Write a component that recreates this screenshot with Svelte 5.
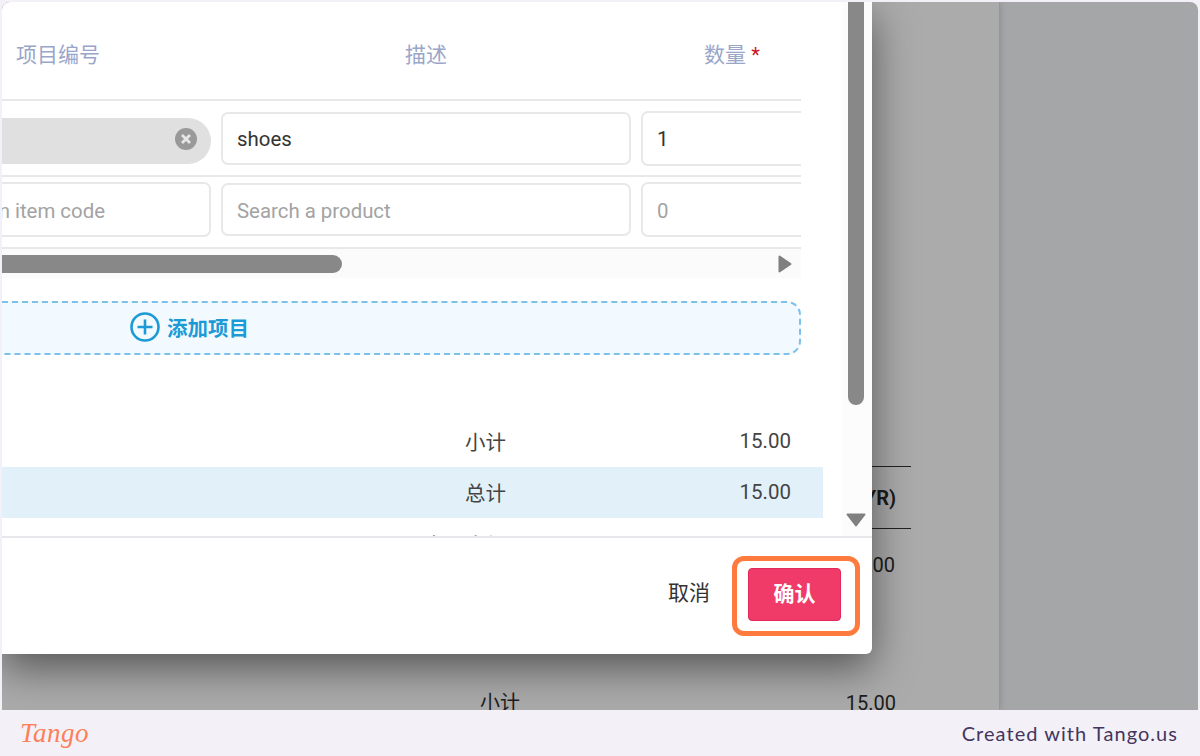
<script>
  const summary = [
    { label: '小计', value: '15.00' },
    { label: '总计', value: '15.00', total: true },
    { label: '实际金额', value: '15.00' }
  ]
</script>

<div class="page">
  <div class="shot">
    <div class="behind">
      <div class="head-lines"><b>(YR)</b></div>
      <div class="behind-num first">15.00</div>
      <div class="behind-row"><span>小计</span><span>15.00</span></div>
    </div>

    <div class="dialog">
      <div class="body">
        <div class="content">
          <div class="table">
            <div class="thead">
              <div class="th code">项目编号</div>
              <div class="th desc">描述</div>
              <div class="th qty">数量 <i>*</i></div>
            </div>

            <div class="row first-row">
              <div class="chip">
                <svg viewBox="0 0 22 22" width="22" height="22">
                  <circle cx="11" cy="11" r="11" fill="#999" />
                  <path d="M7 7l8 8M15 7l-8 8" stroke="#e6e6e6" stroke-width="2.8" />
                </svg>
              </div>
              <div class="input desc-input">shoes</div>
              <div class="input qty-input tall">1</div>
            </div>

            <div class="row second-row">
              <div class="input code-input ph tall"><span class="cut">Search an item code</span></div>
              <div class="input desc-input ph">Search a product</div>
              <div class="input qty-input ph tall">0</div>
            </div>

            <div class="hscroll">
              <div class="hthumb"></div>
              <svg class="harrow" viewBox="0 0 14 18" width="14" height="18"><path d="M1.5 1.5l11 7.500-11 7.500z" fill="#808080" stroke="#808080" stroke-width="2" stroke-linejoin="round" /></svg>
            </div>
          </div>

          <div class="add">
            <svg viewBox="0 0 30 30" width="30" height="30">
              <circle cx="15" cy="15" r="13.500" fill="none" stroke="#1b9ad6" stroke-width="2.600" />
              <path d="M15 7.500v15M7.500 15h15" stroke="#1b9ad6" stroke-width="2.600" />
            </svg>
            <span>添加项目</span>
          </div>

          <div class="summary">
            {#each summary as s}
              <div class="sum-row" class:total={s.total}>
                <span class="sum-label">{s.label}</span>
                <span class="sum-value">{s.value}</span>
              </div>
            {/each}
          </div>
        </div>

        <div class="vscroll">
          <div class="vthumb"></div>
          <svg class="varrow" viewBox="0 0 20 14" width="20" height="14"><path d="M1.5 1.500h17l-8.500 11z" fill="#808080" stroke="#808080" stroke-width="2" stroke-linejoin="round" /></svg>
        </div>
      </div>

      <div class="foot">
        <span class="cancel">取消</span>
        <div class="highlight">
          <button>确认</button>
        </div>
      </div>
    </div>
  </div>

  <div class="footer">
    <span class="logo">Tango</span>
    <span class="credit">Created with Tango.us</span>
  </div>
</div>

<style>
  :global(body) {
    margin: 0;
    background: #f3f1f7;
  }

  .page {
    width: 1200px;
    height: 756px;
    overflow: hidden;
    display: flex;
    flex-direction: column;
    box-sizing: border-box;
    padding-top: 2px;
    background: #f3f1f7;
    font-family: Roboto, "Noto Sans CJK SC", sans-serif;
  }

  .shot {
    position: relative;
    height: 708px;
    margin: 0 2px;
    overflow: hidden;
    border-radius: 8px 8px 0 0;
    background: #a5a6a8;
  }

  .behind {
    position: absolute;
    left: 0;
    top: 0;
    width: 997px;
    height: 708px;
    background: #ababab;
    box-shadow: 1px 0 6px rgba(0, 0, 0, 0.12);
    border-right: 1px solid #979797;
    color: #1c1c1c;
    font-size: 20px;
    line-height: 24px;
  }

  .head-lines {
    position: absolute;
    left: 700px;
    top: 464px;
    width: 209px;
    height: 63px;
    box-sizing: border-box;
    border-top: 1px solid #222;
    border-bottom: 1px solid #222;
    display: flex;
    align-items: center;
    justify-content: flex-end;
    padding-right: 15px;
  }

  .behind-num {
    position: absolute;
    right: 104px;
    top: 551px;
  }

  .behind-row {
    position: absolute;
    top: 689px;
    left: 478px;
    width: 416px;
    display: flex;
    justify-content: space-between;
  }

  .dialog {
    position: absolute;
    left: 0;
    top: 0;
    width: 870px;
    height: 652px;
    display: flex;
    flex-direction: column;
    background: #fff;
    border-radius: 0 0 6px 0;
    box-shadow: 0 14px 42px rgba(0, 0, 0, 0.5);
  }

  .body {
    display: flex;
    height: 534px;
    overflow: hidden;
    border-bottom: 2px solid #e6e8ec;
  }

  .content {
    width: 840px;
    flex: none;
  }

  .table {
    width: 799px;
    overflow: hidden;
  }

  .thead {
    display: flex;
    height: 92px;
    padding-top: 5px;
    align-items: center;
    border-bottom: 2px solid #e8e8e8;
    color: #9aa6c9;
    font-size: 21px;
  }

  .th {
    flex: none;
  }

  .th.code {
    width: 219px;
    box-sizing: border-box;
    padding-left: 14px;
  }

  .th.desc {
    width: 410px;
    text-align: center;
  }

  .th.qty {
    margin-left: 10px;
    width: 182px;
    text-align: center;
    white-space: nowrap;
  }

  .th i {
    color: #d0121b;
    font-style: normal;
    font-size: 20px;
  }

  .row {
    display: flex;
    align-items: center;
    gap: 10px;
    border-bottom: 2px solid #e8e8e8;
    overflow: hidden;
  }

  .first-row {
    height: 74px;
  }

  .second-row {
    height: 65px;
    padding-bottom: 5px;
  }

  .chip {
    flex: none;
    width: 209px;
    height: 46px;
    margin-top: 6px;
    box-sizing: border-box;
    display: flex;
    align-items: center;
    justify-content: flex-end;
    padding: 0 14px 4px 0;
    background: #e0e0e0;
    border-radius: 0 23px 23px 0;
  }

  .input {
    flex: none;
    box-sizing: border-box;
    height: 53px;
    padding: 2px 14px 0;
    display: flex;
    align-items: center;
    border: 2px solid #e8e8e8;
    border-radius: 7px;
    background: #fff;
    color: #333;
    font-size: 20.4px;
  }

  .input.tall {
    height: 55px;
  }

  .input.ph {
    color: #a3a3a3;
  }

  .desc-input {
    width: 410px;
  }

  .qty-input {
    width: 190px;
  }

  .code-input {
    width: 209px;
    padding: 2px 0 0;
    border-left: none;
    border-radius: 0 7px 7px 0;
    justify-content: flex-end;
    overflow: hidden;
    white-space: nowrap;
  }

  .cut {
    padding-right: 104px;
  }

  .hscroll {
    position: relative;
    height: 29px;
    background: #fbfbfb;
  }

  .hthumb {
    position: absolute;
    left: 0;
    top: 6px;
    width: 340px;
    height: 18px;
    background: #888;
    border-radius: 0 9px 9px 0;
  }

  .harrow {
    position: absolute;
    right: 9px;
    top: 6px;
  }

  .add {
    margin-top: 23px;
    width: 799px;
    height: 54px;
    box-sizing: border-box;
    display: flex;
    align-items: center;
    justify-content: center;
    gap: 7px;
    padding: 0 422px 3px 0;
    border: 2px dashed #7cc0ec;
    border-left: none;
    border-radius: 0 14px 14px 0;
    background: #f3faff;
    color: #1b9ad6;
    font-size: 20.5px;
    font-weight: 700;
  }

  .summary {
    margin-top: 60px;
    width: 821px;
    color: #444;
    font-size: 20.5px;
  }

  .sum-row {
    height: 51.5px;
    display: flex;
    align-items: center;
    justify-content: flex-end;
    padding-right: 32px;
  }

  .sum-row.total {
    background: #e2f1f9;
  }

  .sum-value {
    width: 285px;
    text-align: right;
  }

  .vscroll {
    position: relative;
    flex: 1;
    background: #fcfcfc;
  }

  .vthumb {
    position: absolute;
    left: 6px;
    top: 0;
    width: 16px;
    height: 403px;
    background: #888;
    border-radius: 0 0 8px 8px;
  }

  .varrow {
    position: absolute;
    left: 4px;
    top: 511px;
  }

  .foot {
    flex: 1;
    display: flex;
    align-items: center;
    justify-content: flex-end;
    padding-right: 12px;
  }

  .cancel {
    color: #333;
    font-size: 21px;
    margin-right: 22px;
    margin-bottom: 10px;
  }

  .highlight {
    box-sizing: border-box;
    width: 128px;
    height: 80px;
    border: 5px solid #ff7a3d;
    border-radius: 12px;
    display: flex;
    align-items: center;
    justify-content: center;
  }

  button {
    width: 93px;
    height: 53px;
    margin: 0 3px 3px 0;
    padding: 0 0 6px;
    border: 1px solid #e0285a;
    border-radius: 4px;
    background: #f03a68;
    color: #fff;
    font-family: inherit;
    font-size: 21px;
    font-weight: 700;
  }

  .footer {
    flex: 1;
    display: flex;
    align-items: center;
    justify-content: space-between;
    padding: 0 22px 0 20px;
  }

  .logo {
    color: #ff7f57;
    font-family: "Liberation Serif", serif;
    font-style: italic;
    font-size: 27px;
    letter-spacing: 0.5px;
  }

  .credit {
    color: #443560;
    font-family: Lato, sans-serif;
    font-size: 20px;
    letter-spacing: 1.05px;
  }
</style>
